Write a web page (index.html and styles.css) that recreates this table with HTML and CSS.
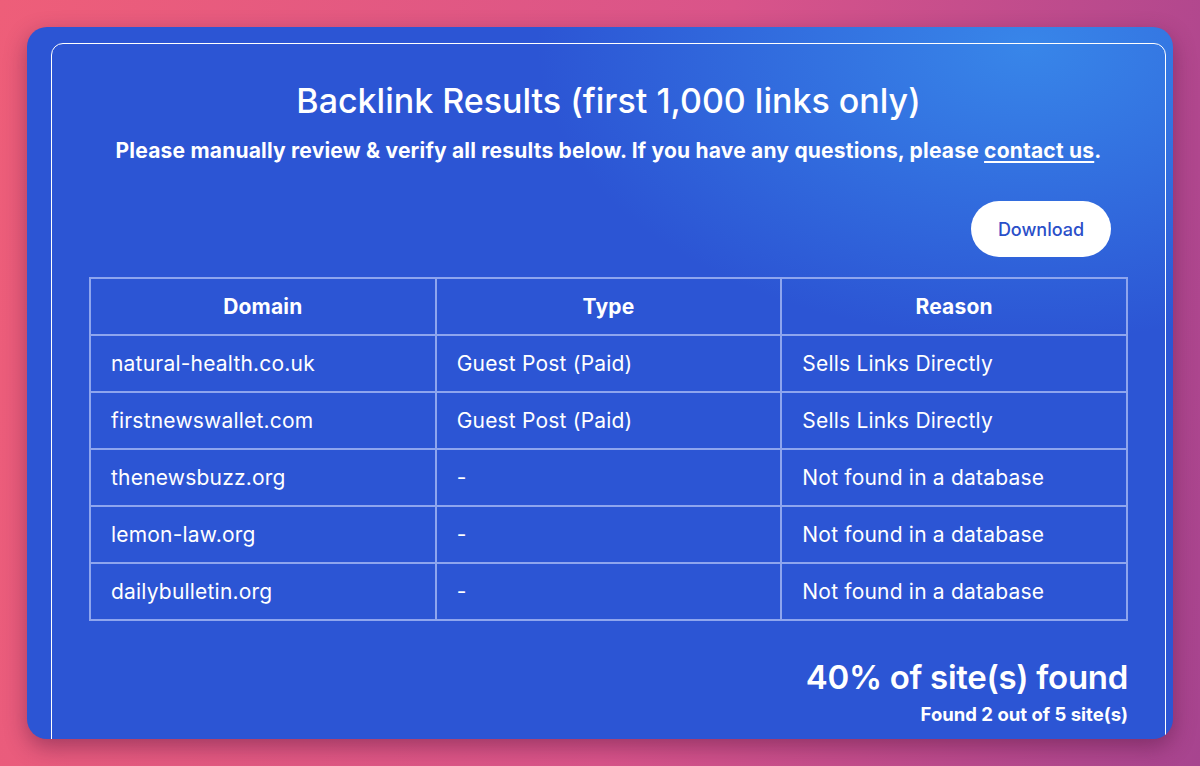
FILE: index.html
```html
<!DOCTYPE html>
<html>
<head>
<meta charset="utf-8">
<link rel="stylesheet" href="styles.css">
</head>
<body>
<div class="page">
  <div class="card">
    <div class="inner">
      <h1 class="title">Backlink Results (first 1,000 links only)</h1>
      <p class="subtitle">Please manually review &amp; verify all results below. If you have any questions, please <a href="#" class="link">contact us</a>.</p>
      <div class="actions"><button class="btn">Download</button></div>
      <table class="results">
        <thead>
          <tr><th>Domain</th><th>Type</th><th>Reason</th></tr>
        </thead>
        <tbody>
          <tr><td>natural-health.co.uk</td><td>Guest Post (Paid)</td><td>Sells Links Directly</td></tr>
          <tr><td>firstnewswallet.com</td><td>Guest Post (Paid)</td><td>Sells Links Directly</td></tr>
          <tr><td>thenewsbuzz.org</td><td>-</td><td>Not found in a database</td></tr>
          <tr><td>lemon-law.org</td><td>-</td><td>Not found in a database</td></tr>
          <tr><td>dailybulletin.org</td><td>-</td><td>Not found in a database</td></tr>
        </tbody>
      </table>
      <div class="summary">
        <div class="pct">40% of site(s) found</div>
        <div class="count">Found 2 out of 5 site(s)</div>
      </div>
    </div>
  </div>
</div>
</body>
</html>
```
FILE: styles.css
```css
* { box-sizing: border-box; }
html, body {
  margin: 0;
  padding: 0;
  width: 1200px;
  height: 766px;
  overflow: hidden;
}
body {
  font-family: Inter, "Noto Sans", sans-serif;
  color: #fff;
  background: linear-gradient(100deg, #ee5e79 0%, #d9548a 55%, #a7448f 100%);
}
.page {
  padding: 27px 27px 0 27px;
}
.card {
  width: 1146px;
  height: 712px;
  border-radius: 20px;
  overflow: hidden;
  background:
    radial-gradient(ellipse 700px 420px at 1000px 20px, rgba(60,150,240,0.75), rgba(60,150,240,0) 70%),
    #2c55d4;
  box-shadow: 0 8px 22px rgba(80, 20, 60, 0.45);
  padding: 16px 7px 0 24px;
}
.inner {
  border: 1.5px solid #fff;
  border-radius: 12px;
  height: 760px;
  padding: 35px 37px 0 37px;
}
.title {
  margin: 0;
  text-align: center;
  font-size: 34px;
  font-weight: 500;
  line-height: 44px;
  letter-spacing: 0;
}
.subtitle {
  margin: 14px 0 0 0;
  text-align: center;
  font-size: 21px;
  font-weight: 700;
  line-height: 28px;
  letter-spacing: 0.2px;
}
.link {
  color: #fff;
  text-decoration: underline;
  text-underline-offset: 3px;
}
.actions {
  display: flex;
  justify-content: flex-end;
  margin-top: 36px;
  padding-right: 17px;
}
.btn {
  font-family: inherit;
  width: 140px;
  height: 56px;
  border: none;
  border-radius: 28px;
  background: #fff;
  color: #2b4fc9;
  font-size: 18px;
  font-weight: 500;
}
.results {
  margin-top: 20px;
  width: 1039px;
  border-collapse: collapse;
  table-layout: fixed;
}
.results th, .results td {
  border: 2px solid #8ea5ee;
  height: 57px;
  font-size: 21px;
  line-height: 24px;
  letter-spacing: 0.2px;
}
.results th {
  font-weight: 700;
  text-align: center;
}
.results td {
  font-weight: 400;
  padding: 0 20px;
  text-align: left;
}
.summary {
  width: 1039px;
  text-align: right;
  margin-top: 35px;
}
.pct {
  font-size: 33px;
  font-weight: 600;
  line-height: 42px;
  letter-spacing: -0.3px;
}
.count {
  font-size: 18.5px;
  font-weight: 700;
  line-height: 22px;
  margin-top: 5px;
}
```
